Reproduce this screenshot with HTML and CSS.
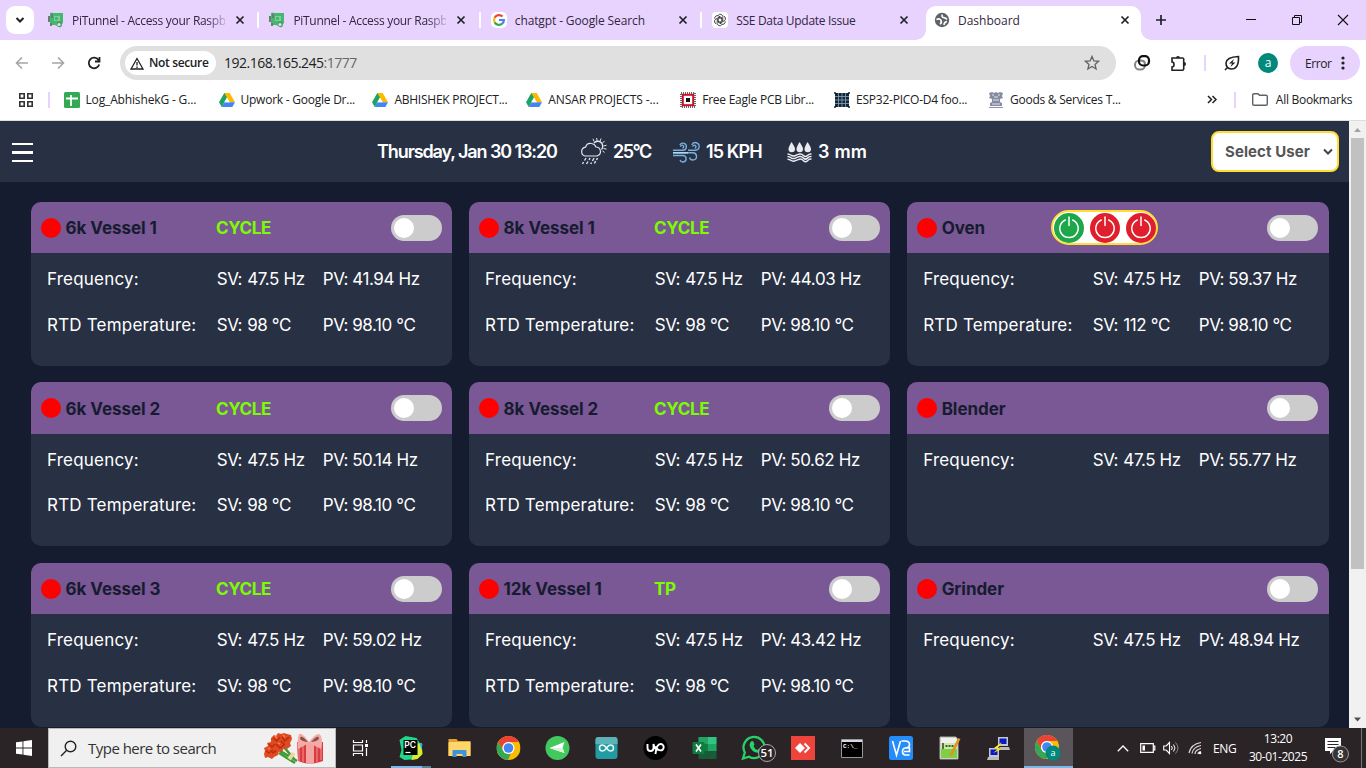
FILE: index.html
```
<!DOCTYPE html>
<html lang="en">
<head>
<meta charset="utf-8">
<title>Dashboard</title>
<link rel="stylesheet" href="styles.css">
</head>
<body>
<svg class="defs" width="0" height="0" aria-hidden="true">
  <symbol id="close" viewBox="0 0 10 10"><path d="M1.500 1.500l7 7M8.500 1.500l-7 7" stroke="#202124" stroke-width="1.700" fill="none"/></symbol>
  <symbol id="pi" viewBox="0 0 16 16"><path d="M2 1l2-.5L5 1h10v10l-1 1v2l-2 1.500L9 14l-2-1H3l-1-2z" fill="#45b86f"/><path d="M1 4v6M3 11v3M4 2v4" fill="none" stroke="#6d7a74" stroke-width="2"/><path d="M6 4h6v5H6z" fill="#7fd09c"/><circle cx="8.500" cy="6.500" r="1.800" fill="#45b86f"/><path d="M9 10l3-1 2 2-2 4-3-1z" fill="#5d8f70"/><circle cx="11" cy="12.500" r="1.600" fill="#d5e8dc"/></symbol>
  <symbol id="drive" viewBox="0 0 16 14"><path d="M5.300 0h5.200L8 4.500 2.700 14 0 9.300z" fill="#1ea362"/><path d="M5.300 0h5.400L16 9.300h-5.300z" fill="#ffba00"/><path d="M5.300 9.300H16L13.300 14H2.700z" fill="#4285f4"/><path d="M8 4.700l2.700 4.600H5.300z" fill="#fff"/></symbol>
  <symbol id="power" viewBox="0 0 32 32"><circle cx="16" cy="16" r="15"/><path d="M12.300 8A9.200 9.200 0 1 0 19.700 8M16 5v8.500" fill="none" stroke="#fff" stroke-width="1.500" stroke-linecap="round"/></symbol>
  <symbol id="chrome" viewBox="0 0 24 24"><circle cx="12" cy="12" r="12" fill="#fbbc04"/><path d="M1.600 6A12 12 0 0 1 22.400 6H12a6 6 0 0 0-5.200 9z" fill="#ea4335"/><path d="M1.600 6l5.200 9a6 6 0 0 0 7.500 2.500L11.500 24A12 12 0 0 1 1.600 6z" fill="#34a853"/><circle cx="12" cy="12" r="6.100" fill="#fff"/><circle cx="12" cy="12" r="4.800" fill="#4285f4"/></symbol>
</svg>

<div class="tabstrip">
  <div class="tabsearch"><svg width="10" height="8" viewBox="0 0 10 8"><path d="M1.500 2L5 5.500 8.500 2" fill="none" stroke="#202124" stroke-width="2"/></svg></div>
  <div class="tab"><svg class="fav" width="16" height="16"><use href="#pi"/></svg><span class="tt fade t1">PiTunnel - Access your Raspb</span><svg width="10" height="10"><use href="#close"/></svg></div>
  <div class="tab sep"><svg class="fav" width="16" height="16"><use href="#pi"/></svg><span class="tt fade t1">PiTunnel - Access your Raspb</span><svg width="10" height="10"><use href="#close"/></svg></div>
  <div class="tab sep"><svg class="fav" width="16" height="16" viewBox="0 0 16 16"><rect width="16" height="16" rx="5" fill="#fff"/><g fill="none" stroke-width="2.200"><path d="M3.700 5.600A4.900 4.900 0 0 1 11.500 4.600" stroke="#ea4335"/><path d="M3.700 5.600a5 5 0 0 0 0 4.800" stroke="#fbbc04"/><path d="M3.700 10.400a4.900 4.900 0 0 0 7.500 1.300" stroke="#34a853"/><path d="M8 8h4.900a4.900 4.900 0 0 1-1.700 3.700" stroke="#4285f4"/></g></svg><span class="tt t2">chatgpt - Google Search</span><svg width="10" height="10"><use href="#close"/></svg></div>
  <div class="tab sep"><svg class="fav" width="16" height="16" viewBox="0 0 16 16"><rect width="16" height="16" rx="4" fill="#fff"/><g transform="translate(8 8)" fill="none" stroke="#222" stroke-width=".8"><path id="petal" d="M-1.500-5.200a2.700 2.700 0 0 1 4.300 1.600V.5L0 2.200"/><use href="#petal" transform="rotate(60)"/><use href="#petal" transform="rotate(120)"/><use href="#petal" transform="rotate(180)"/><use href="#petal" transform="rotate(240)"/><use href="#petal" transform="rotate(300)"/></g></svg><span class="tt t3">SSE Data Update Issue</span><svg width="10" height="10"><use href="#close"/></svg></div>
  <div class="tab active"><svg class="fav" width="16" height="16" viewBox="0 0 16 16"><circle cx="8" cy="8" r="7.200" fill="#5f6368"/><path d="M2.500 7.500Q6 6 7 8.500T6 12" fill="none" stroke="#fff" stroke-width="1.700"/><path d="M8.500 2.500Q7 5 9.500 5.500T13 7.500M10 13q0-3 3-3.500" fill="none" stroke="#fff" stroke-width="1.500"/></svg><span class="tt t4">Dashboard</span><svg width="10" height="10"><use href="#close"/></svg></div>
  <svg class="plus" width="12" height="12" viewBox="0 0 12 12"><path d="M6 1v10M1 6h10" stroke="#202124" stroke-width="1.700"/></svg>
  <div class="wincontrols">
    <svg width="12" height="12" viewBox="0 0 12 12"><path d="M1 5.500h10" stroke="#111"/></svg>
    <svg width="12" height="12" viewBox="0 0 12 12"><path d="M1.500 3.500h7v7h-7zM3.500 3.500v-2h7v7h-2" fill="none" stroke="#111"/></svg>
    <svg width="12" height="12" viewBox="0 0 12 12"><path d="M1 1l10 10M11 1L1 11" stroke="#111" stroke-width="1.100"/></svg>
  </div>
</div>

<div class="toolbar">
  <svg class="nav" width="16" height="16" viewBox="0 0 16 16"><path d="M14 8H3M8 2.500L2.500 8 8 13.500" fill="none" stroke="#a5a5a5" stroke-width="1.600"/></svg>
  <svg class="nav" width="16" height="16" viewBox="0 0 16 16"><path d="M2 8h11M8 2.500L13.500 8 8 13.500" fill="none" stroke="#a5a5a5" stroke-width="1.600"/></svg>
  <svg class="nav" width="16" height="16" viewBox="0 0 16 16"><path d="M13.200 9.500A5.300 5.300 0 1 1 12.500 5L13.500 6M13.500 2v4.500H9" fill="none" stroke="#202124" stroke-width="1.800"/></svg>
  <div class="omnibox">
    <div class="chip"><svg width="14" height="13" viewBox="0 0 14 13"><path d="M7 1.500l6 10.500H1zM7 5v3.500M7 9.500V11" fill="none" stroke="#202124" stroke-width="1.300"/></svg><span>Not secure</span></div>
    <span class="url">192.168.165.245<i>:1777</i></span>
    <svg class="star" width="16" height="16" viewBox="0 0 16 16"><path d="M8 1.500l1.900 4.400 4.700.4-3.600 3.100 1.100 4.600L8 11.500 3.900 14 5 9.400 1.400 6.300l4.700-.4z" fill="none" stroke="#5f6368" stroke-width="1.300"/></svg>
  </div>
  <svg class="x1" width="16" height="16" viewBox="0 0 16 16"><rect x="1" y="5.500" width="10" height="9" rx="4.300" fill="none" stroke="#858585" stroke-width="2"/><rect x="5" y="1.200" width="10" height="9.300" rx="4" fill="none" stroke="#111" stroke-width="2.200"/><path d="M6.500 5.500H8q3 0 3 3" fill="none" stroke="#858585" stroke-width="1.600"/></svg>
  <svg class="x2" width="17" height="17" viewBox="0 0 17 17"><path d="M2 3h10.500q1.200 0 1.200 1v10q0 1.300-1.200 1.300H2V12q2 0 2-2.500T2 7z" fill="none" stroke="#202124" stroke-width="1.600"/><path d="M6 3a2 2 0 0 1 4 0M14 7a2 2 0 0 1 0 4" fill="#202124"/></svg>
  <b class="vbar v1"></b>
  <svg class="x3" width="16" height="16" viewBox="0 0 16 16"><path d="M14.500 1.500Q15 14 7.500 14 2 13.500 2 8q.5-6 12.500-6.500zM1 15l3-3" fill="none" stroke="#202124" stroke-width="1.600"/><path d="M10 4L5 8.500h3L6.500 12 11.500 7.500h-3z" fill="#202124"/></svg>
  <div class="avatar">a</div>
  <div class="error"><span>Error</span><svg width="4" height="16" viewBox="0 0 4 16"><g fill="#202124"><circle cx="2" cy="3" r="1.600"/><circle cx="2" cy="8" r="1.600"/><circle cx="2" cy="13" r="1.600"/></g></svg></div>
</div>

<div class="bookmarks">
  <svg class="apps" width="14" height="14" viewBox="0 0 14 14"><path d="M.8.800h4.400v4.400H.8zM8.800.800h4.400v4.400H8.800zM.8 8.800h4.400v4.400H.8zM8.800 8.800h4.400v4.400H8.800z" fill="none" stroke="#333" stroke-width="1.600"/></svg>
  <b class="vbar v2"></b>
  <div class="bm b1"><svg width="16" height="16" viewBox="0 0 16 16"><rect width="16" height="16" rx="1.500" fill="#34a853"/><path d="M7 3v11M2 6.500h12" stroke="#fff" stroke-width="1.800"/></svg><span>Log_AbhishekG - G...</span></div>
  <div class="bm b2"><svg width="16" height="14"><use href="#drive"/></svg><span>Upwork - Google Dr...</span></div>
  <div class="bm b3"><svg width="16" height="14"><use href="#drive"/></svg><span>ABHISHEK PROJECT...</span></div>
  <div class="bm b4"><svg width="16" height="14"><use href="#drive"/></svg><span>ANSAR PROJECTS -...</span></div>
  <div class="bm b5"><svg width="16" height="16" viewBox="0 0 16 16"><rect x="1" y="1" width="14" height="14" fill="none" stroke="#666" stroke-width="2" stroke-dasharray="1 1"/><rect x="2.800" y="2.800" width="10.400" height="10.400" fill="#fff" stroke="#c8102e" stroke-width="2"/><rect x="6" y="6" width="4" height="4" fill="#111"/></svg><span>Free Eagle PCB Libr...</span></div>
  <div class="bm b6"><svg width="16" height="16" viewBox="0 0 16 16"><rect x="1" y="1" width="14" height="14" fill="#12263a"/><path d="M0 1h2M14 1h2M0 15h2M14 15h2" stroke="#12263a" stroke-width="1.500"/><path d="M1 4.500h14M1 8h14M1 11.500h14M4.500 1v14M8 1v14M11.500 1v14" stroke="#8ea3b8" stroke-width=".8"/></svg><span>ESP32-PICO-D4 foo...</span></div>
  <div class="bm b7"><svg width="16" height="16" viewBox="0 0 16 16"><path d="M1 1l3-1 2 1 2-1 2 1 2-1 3 1-1 3 1 2-3 1v3l2 1v3H2v-3l2-1V7L1 6l1-2z" fill="#878da0"/><path d="M4 3h2M10 3h2M6 5h4M5 8h6M4 12h8" stroke="#dfe2ec"/><path d="M1 15.500h14" stroke="#8b91a5"/></svg><span>Goods &amp; Services T...</span></div>
  <svg class="more" width="10" height="9" viewBox="0 0 10 9"><path d="M1 1l3.500 3.500L1 8M5.500 1L9 4.500 5.500 8" fill="none" stroke="#202124" stroke-width="1.500"/></svg>
  <b class="vbar v3"></b>
  <div class="bm all"><svg width="16" height="13" viewBox="0 0 16 13"><path d="M.7 11V2q0-1.300 1.300-1.300h4l1.500 1.600h6.500q1.300 0 1.300 1.200V11q0 1.200-1.300 1.200H2Q.7 12.200.7 11z" fill="none" stroke="#5f6368" stroke-width="1.400"/></svg><span>All Bookmarks</span></div>
</div>

<div class="view">
  <div class="page">
    <header class="head">
      <div class="menu"><i></i><i></i><i></i></div>
      <span class="date">Thursday, Jan 30 13:20</span>
      <svg class="wx w1" width="27" height="27" viewBox="0 0 27 27"><g fill="none" stroke="#e2e5ea" stroke-width="1.200"><path d="M5 18a4.500 4.500 0 0 1 .5-8.800Q7 4.500 11.500 5.500 15 6 16 9q4 0 4.500 4.500 0 3.500-3.500 4.500z"/><path d="M14 5a4.500 4.500 0 0 1 7.500 6.500" stroke-width="1.400"/><path d="M14 3.500L13 .8M17 3l-.3-3M20 3.500l1-3M22 5.500L24.500 3M23.500 8l3-.8M23.500 10.500l3 .6M22.500 13l2 1.400" stroke-width="1"/><path d="M6 20l-1.500 2.500M10 20l-1 2M14 20l-1.500 3M17.500 20l-1 2M3.500 24l-1 2M8 23.500L6.500 26M11.500 24.500l-.7 1.500M15.500 23l-1 2.500" stroke-width="1.400"/></g></svg>
      <span class="temp">25°C</span>
      <svg class="wx w2" width="28" height="22" viewBox="0 0 28 22"><g fill="none" stroke="#78b0db" stroke-width="1.400"><path d="M1 9.200h9.500a3.500 3.500 0 1 0-2.700-5.200M16 9.200h7.500a3.800 3.800 0 1 0-3.700-5.200"/><path d="M8.500 5.800a1.600 1.600 0 1 1 2 1.500M20.800 5.800a1.600 1.600 0 1 1 2 1.500"/><path d="M1 11.800h20a3.600 3.600 0 1 1-3.500 4.700M1 14.500h10a3.200 3.200 0 1 1-3 4.500"/></g><path d="M1 11.800h15" stroke="#b7dcf5" stroke-width="1.400"/></svg>
      <span class="wind">15 KPH</span>
      <svg class="wx w3" width="25" height="20" viewBox="0 0 25 20"><g fill="#e8eaee"><path id="drop" d="M4.500 0Q8 5 8 7a3 3 0 0 1-6.500 0Q1.500 5 4.500 0z"/><use href="#drop" x="8"/><use href="#drop" x="16"/></g><g fill="none" stroke="#e8eaee" stroke-width="1.500"><path id="wave" d="M.5 12q2 0 4 1.500 2 1 4 0t4-1.500 4 1.500 4 0 4-1.500"/><use href="#wave" y="2.600"/><use href="#wave" y="5.200"/></g></svg>
      <span class="rain">3 mm</span>
      <div class="select"><span>Select User</span><svg width="10" height="8" viewBox="0 0 10 8"><path d="M1 1.500L5 5.500 9 1.500" fill="none" stroke="#444" stroke-width="2"/></svg></div>
    </header>
    <main class="grid">
      <section class="card"><div class="ch"><b class="dot"></b><h2>6k Vessel 1</h2><em>CYCLE</em><b class="toggle"></b></div><div class="row"><span class="f">Frequency:</span><span>SV:</span><span>47.5 Hz</span><span>PV:</span><span>41.94 Hz</span></div><div class="row"><span class="r">RTD Temperature:</span><span>SV:</span><span>98 °C</span><span>PV:</span><span>98.10 °C</span></div></section>
      <section class="card"><div class="ch"><b class="dot"></b><h2>8k Vessel 1</h2><em>CYCLE</em><b class="toggle"></b></div><div class="row"><span class="f">Frequency:</span><span>SV:</span><span>47.5 Hz</span><span>PV:</span><span>44.03 Hz</span></div><div class="row"><span class="r">RTD Temperature:</span><span>SV:</span><span>98 °C</span><span>PV:</span><span>98.10 °C</span></div></section>
      <section class="card"><div class="ch"><b class="dot"></b><h2>Oven</h2><div class="powers"><svg class="on" width="32" height="32"><use href="#power"/></svg><svg width="32" height="32"><use href="#power"/></svg><svg width="32" height="32"><use href="#power"/></svg></div><b class="toggle"></b></div><div class="row"><span class="f">Frequency:</span><span>SV:</span><span>47.5 Hz</span><span>PV:</span><span>59.37 Hz</span></div><div class="row"><span class="r">RTD Temperature:</span><span>SV:</span><span>112 °C</span><span>PV:</span><span>98.10 °C</span></div></section>
      <section class="card"><div class="ch"><b class="dot"></b><h2>6k Vessel 2</h2><em>CYCLE</em><b class="toggle"></b></div><div class="row"><span class="f">Frequency:</span><span>SV:</span><span>47.5 Hz</span><span>PV:</span><span>50.14 Hz</span></div><div class="row"><span class="r">RTD Temperature:</span><span>SV:</span><span>98 °C</span><span>PV:</span><span>98.10 °C</span></div></section>
      <section class="card"><div class="ch"><b class="dot"></b><h2>8k Vessel 2</h2><em>CYCLE</em><b class="toggle"></b></div><div class="row"><span class="f">Frequency:</span><span>SV:</span><span>47.5 Hz</span><span>PV:</span><span>50.62 Hz</span></div><div class="row"><span class="r">RTD Temperature:</span><span>SV:</span><span>98 °C</span><span>PV:</span><span>98.10 °C</span></div></section>
      <section class="card"><div class="ch"><b class="dot"></b><h2>Blender</h2><b class="toggle"></b></div><div class="row"><span class="f">Frequency:</span><span>SV:</span><span>47.5 Hz</span><span>PV:</span><span>55.77 Hz</span></div></section>
      <section class="card"><div class="ch"><b class="dot"></b><h2>6k Vessel 3</h2><em>CYCLE</em><b class="toggle"></b></div><div class="row"><span class="f">Frequency:</span><span>SV:</span><span>47.5 Hz</span><span>PV:</span><span>59.02 Hz</span></div><div class="row"><span class="r">RTD Temperature:</span><span>SV:</span><span>98 °C</span><span>PV:</span><span>98.10 °C</span></div></section>
      <section class="card"><div class="ch"><b class="dot"></b><h2>12k Vessel 1</h2><em>TP</em><b class="toggle"></b></div><div class="row"><span class="f">Frequency:</span><span>SV:</span><span>47.5 Hz</span><span>PV:</span><span>43.42 Hz</span></div><div class="row"><span class="r">RTD Temperature:</span><span>SV:</span><span>98 °C</span><span>PV:</span><span>98.10 °C</span></div></section>
      <section class="card"><div class="ch"><b class="dot"></b><h2>Grinder</h2><b class="toggle"></b></div><div class="row"><span class="f">Frequency:</span><span>SV:</span><span>47.5 Hz</span><span>PV:</span><span>48.94 Hz</span></div></section>
    </main>
  </div>
  <div class="scrollbar">
    <svg width="17" height="17" viewBox="0 0 17 17"><path d="M5 11l3.500-4 3.500 4z" fill="#a3a3a3"/></svg>
    <div class="thumb"></div>
    <svg class="down" width="17" height="17" viewBox="0 0 17 17"><path d="M5 6.500l3.500 4 3.500-4z" fill="#505050"/></svg>
  </div>
</div>

<footer class="taskbar">
  <div class="start"><svg width="16" height="16" viewBox="0 0 16 16"><path d="M0 2.300l6.500-.9v6.100H0zM7.400 1.200L16 0v7.500H7.400zM0 8.400h6.500v6.200L0 13.700zM7.400 8.400H16V16l-8.600-1.200z" fill="#fff"/></svg></div>
  <div class="search">
    <svg width="17" height="17" viewBox="0 0 17 17"><circle cx="10.500" cy="6.500" r="5.300" fill="none" stroke="#222" stroke-width="1.400"/><path d="M6.700 10.300L1 16" stroke="#222" stroke-width="1.400"/></svg>
    <span>Type here to search</span>
    <svg class="gift" width="62" height="34" viewBox="0 0 62 34"><path d="M14 18L34 30M16 22l16 10M20 15l12 14" stroke="#3e9b35" stroke-width="2.500"/><path d="M26 28l5-6" stroke="#e8d9a5" stroke-width="4"/><g fill="#e04a20"><path d="M8 7l3-3 2 1 2-3 3 1 3-1 3 1 4 1 1 4-2 4 1 3-4 3-3-1-2 4-3-1-1 4-4 2-2 2-4-2-3 1-1-4 1-3-1-3 4-2-1-3 4-1z"/></g><path d="M10 7l4 3 3-4M19 6l3 4 4-4M13 13l4 4 5-4M3 20l3 2 4-3M6 13l3 3 3-3M18 10l3 3M9 22l4-2" fill="none" stroke="#b92a13" stroke-width="1.400"/><path d="M12 5l2 2M20 4l2 2M15 12l2 1M5 17l2 1" stroke="#ff8252" stroke-width="1.300"/><path d="M34 11h26v19q-13 5-25 0z" fill="#d83b40"/><path d="M36 15v15M40 14v18M54 14v18M58 14v15" stroke="#ef7575" stroke-width="1.500"/><path d="M43 12h8v21h-8z" fill="#f3a3a0"/><path d="M46 11Q36-3 35 7q-1 7 0 11l11-6 12 6q2-6 0-13-3-6-12 6z" fill="#f5aaa5"/><path d="M45 11q-7-8-8-4 0 3 8 4zM48 11q7-8 8-4 0 3-8 4z" fill="#86504d"/></svg>
  </div>
  <div class="apps-row">
    <div class="slot"><svg width="17" height="16" viewBox="0 0 17 16"><path d="M1.500 0v2.500h9V0M1.500 16v-2.500h9V16M1.500 5h9v6h-9zM14.500 0v3M14.500 8v8" fill="none" stroke="#fff" stroke-width="1.200"/><path d="M13 4h3v3h-3z" fill="#fff"/></svg></div>
    <div class="slot run"><svg width="24" height="24" viewBox="0 0 24 24"><path d="M1 4l6-4 11 2 4 6 1 11-5 4-12 1-5-3 2-7z" fill="#21d789"/><path d="M17 8l6-1 1 11-5 5-6 1z" fill="#d8ed32"/><path d="M21 7l3 1-1 6z" fill="#18b8ee"/><path d="M5 4h14v15H5z" fill="#050505"/><text x="5.800" y="12" fill="#fff" font-family="Inter" font-size="8.500" font-weight="600">PC</text><path d="M7 16.500h5" stroke="#fff" stroke-width="1.200"/></svg></div>
    <div class="slot"><svg width="22" height="20" viewBox="0 0 22 20"><path d="M0 1h8l1.500 2H22v15H0z" fill="#e0a22c"/><path d="M0 5q0-1 1-1h21v14H0z" fill="#ffd667"/><path d="M4 19v-6q0-1 1-1h12q1 0 1 1v6h-4v-3H8v3z" fill="#3d94dc"/></svg></div>
    <div class="slot"><svg width="24" height="24"><use href="#chrome"/></svg></div>
    <div class="slot"><svg width="24" height="24" viewBox="0 0 24 24"><circle cx="12" cy="12" r="12" fill="#43c85f"/><path d="M4 12l15-6-2 6 2 5z" fill="#fff"/><path d="M4 12h13l2 5z" fill="#d8f1dd"/></svg></div>
    <div class="slot"><svg width="22" height="22" viewBox="0 0 22 22"><rect width="22" height="22" rx="3" fill="#239ba2"/><path d="M0 7V3q0-3 3-3h16q3 0 3 3v4z" fill="#5bb3b7"/><path d="M11 11c-2-3-3-3-4-3a3 3 0 0 0 0 6c1 0 2 0 4-3s3-3 4-3a3 3 0 0 1 0 6c-1 0-2 0-4-3z" fill="none" stroke="#e7f7f5" stroke-width="1.500"/></svg></div>
    <div class="slot"><svg width="24" height="24" viewBox="0 0 24 24"><circle cx="12" cy="12" r="12" fill="#000"/><path d="M4 8v4a3 3 0 0 0 6 0V8q1 5 4 6M12 18q1-10 5-10a3.200 3.200 0 0 1 0 6.400q-3 0-5-4" fill="none" stroke="#fff" stroke-width="1.900"/></svg></div>
    <div class="slot"><svg width="24" height="22" viewBox="0 0 24 22"><path d="M6 0h18v22H6z" fill="#185c37"/><path d="M6 0h9v7H6z" fill="#21a366"/><path d="M15 0h9v7h-9z" fill="#33c481"/><path d="M15 7h9v7h-9z" fill="#21a366"/><path d="M6 7h9v7H6z" fill="#107c41"/><rect y="5" width="12" height="12" rx="1" fill="#107c41"/><path d="M3.500 7.500l5 7M8.500 7.500l-5 7" stroke="#fff" stroke-width="1.600"/></svg></div>
    <div class="slot"><svg class="wide" width="34" height="28" viewBox="0 0 34 28"><path d="M1.500 24.500l1.800-6a10.500 10.500 0 1 1 4.200 4.200z" fill="none" stroke="#25d366" stroke-width="2.300"/><path d="M9 8q2-2 3 0l1 2.500-1 1.500q1 3 4 4l1.500-1.500 3 1.500q0 3-3 3Q9 18 8 11z" fill="#25d366"/><circle cx="25.500" cy="19" r="8.500" fill="#2b2629" stroke="#aaa"/><text x="25.500" y="23.200" text-anchor="middle" fill="#fff" font-family="Open Sans" font-size="11.500" font-weight="600">51</text></svg></div>
    <div class="slot"><svg width="24" height="24" viewBox="0 0 24 24"><path d="M0 0h24v24H0z" fill="#ef443b"/><path d="M9 7l5 5-5 5-5-5z" fill="#fff"/><path d="M13.500 7.500L18 12l-4.500 4.500" fill="none" stroke="#fff" stroke-width="2"/></svg></div>
    <div class="slot"><svg width="22" height="19" viewBox="0 0 22 19"><path d="M.5.500h21v18H.5z" fill="#000" stroke="#999"/><path d="M1 1h20v2H1z" fill="#d5dbe5"/><text x="2" y="9" font-family="Liberation Mono" font-size="6" font-weight="700" fill="#fff">C:\_</text></svg></div>
    <div class="slot"><svg width="24" height="24" viewBox="0 0 24 24"><rect width="24" height="24" rx="2.500" fill="#258cfb"/><path d="M3.500 5l4 14 4-14M12.500 5H16q4.500 0 4.500 3.500T16 12q-2.500.5-2.500 3.500T16 19h4.500M15 15.500h5.500V12H16" fill="none" stroke="#fff" stroke-width="1.600"/></svg></div>
    <div class="slot"><svg width="22" height="24" viewBox="0 0 22 24"><path d="M1 1h16l2 3v19H1z" fill="#eef2e9" stroke="#aaa"/><path d="M2 13h16v9H2z" fill="#7fcf40"/><path d="M2 7h16v6H2z" fill="#c8eda2"/><path d="M4 7v6M6.500 10h2M9.500 10h2M12.500 10h2" stroke="#222" stroke-width="1.300"/><path d="M11 18l8-16 2.500 1-8 15.500-3 2z" fill="#e58f24"/></svg></div>
    <div class="slot"><svg width="24" height="23" viewBox="0 0 24 23"><path d="M11 0h10v9H11zM2 11h10v9H2z" fill="#c8c8c8"/><path d="M12.500 1.500h7v5.500h-7zM3.500 12.500h7V18h-7z" fill="#0718cd"/><path d="M12 10h10l1 3h-9zM1 20h11v3H0z" fill="#bababa"/><path d="M15 5L7 11l4 1-5 4 9-4-4-1z" fill="#fff020"/></svg></div>
    <div class="slot cur"><svg width="26" height="26" viewBox="0 0 26 26"><use href="#chrome" width="24" height="24"/><circle cx="18" cy="18" r="7.500" fill="#00897b"/><text x="18" y="21" text-anchor="middle" font-family="Open Sans" font-size="9" fill="#fff">a</text></svg></div>
  </div>
  <div class="tray">
    <svg class="ic" width="12" height="7" viewBox="0 0 12 7"><path d="M.8 6.200L6 1l5.200 5.200" fill="none" stroke="#fff" stroke-width="1.300"/></svg>
    <svg class="ic i2" width="16" height="10" viewBox="0 0 16 10"><path d="M.7.700h12.600v8.600H.7zM13.500 3h1.300v4h-1.300" fill="none" stroke="#fff" stroke-width="1.200"/><path d="M2.500 2.500H5v5H2.500z" fill="#fff"/></svg>
    <svg class="ic" width="16" height="14" viewBox="0 0 16 14"><path d="M.7 5h2.500L6.500 1.500v11L3.200 9H.7z" fill="none" stroke="#fff" stroke-width="1.100"/><path d="M8.500 5q1.500 2 0 4M10.500 3.500q3 3.500 0 7" fill="none" stroke="#fff"/><path d="M12.500 1.500q5 5.500 0 11" fill="none" stroke="#888"/></svg>
    <svg class="ic" width="14" height="14" viewBox="0 0 14 14"><path d="M1 12Q3 3 13 1.500M4 12.500Q5 6 13 4.500M7 13q0-4 6-5.500M10 13q0-2 3-2.500" fill="none" stroke="#ddd" stroke-width="1.200"/><circle cx="12" cy="12" r="1.300" fill="#fff"/></svg>
    <span class="lang">ENG</span>
    <div class="clock"><span>13:20</span><span class="d">30-01-2025</span></div>
    <svg class="note" width="26" height="25" viewBox="0 0 26 25"><path d="M1 0h16v13H9l-3 3v-3H1z" fill="#fff"/><path d="M3.500 3.500h11M3.500 6.500h11M3.500 9.500h8" stroke="#2b2629"/><circle cx="16.500" cy="16" r="8" fill="#373335" stroke="#999"/><text x="16.500" y="20.200" text-anchor="middle" font-family="Open Sans" font-size="11" font-weight="600" fill="#fff">8</text></svg>
    <b class="desk"></b>
  </div>
</footer>
</body>
</html>
```

FILE: styles.css
```
* { box-sizing: border-box; }
body { margin: 0; width: 1366px; height: 768px; overflow: hidden; display: flex; flex-direction: column; background: #fff; font-family: "Open Sans", "Noto Sans", sans-serif; font-size: 12px; color: #202124; }
svg { display: block; flex: none; overflow: visible; }
.defs { position: absolute; }
span { white-space: nowrap; }

/* tab strip */
.tabstrip { height: 40px; flex: none; display: flex; align-items: center; background: #e8d3ff; padding-left: 6px; }
.tabsearch { width: 28px; height: 28px; border-radius: 9px; background: #fff; display: flex; align-items: center; justify-content: center; }
.tab { width: 221.400px; height: 40px; display: flex; align-items: center; padding-left: 14px; position: relative; flex: none; }
.tab .tt { width: 153px; margin: 1px 10px 0 8px; color: #33263f; }
.tab .fade { -webkit-mask-image: linear-gradient(90deg, #000 88%, transparent 103%); mask-image: linear-gradient(90deg, #000 88%, transparent 103%); }
.tab.sep::before { content: ""; position: absolute; left: 2px; top: 12px; width: 2px; height: 16px; background: #fff; border-radius: 1px; }
.tab.active { width: 215px; height: 34px; align-self: flex-end; background: #fff; border-radius: 10px 10px 0 0; padding: 0 0 6px 8px; margin-left: 6.400px; }
.tab.active .tt { margin-right: 9px; }
.tab.active::before, .tab.active::after { content: ""; position: absolute; bottom: 0; width: 10px; height: 10px; }
.tab.active::before { left: -10px; background: radial-gradient(circle at 0 0, transparent 9.500px, #fff 10px); }
.tab.active::after { right: -10px; background: radial-gradient(circle at 100% 0, transparent 9.500px, #fff 10px); }
.tab .t1 { letter-spacing: -0.3px; }
.t2 { letter-spacing: -0.12px; }
.t3 { letter-spacing: -0.3px; }
.plus { margin-left: 14px; }
.wincontrols { margin-left: auto; display: flex; gap: 34px; padding-right: 17px; }

/* toolbar */
.toolbar { height: 46px; flex: none; display: flex; align-items: center; padding: 0 6px 0 14px; background: #fff; }
.nav { margin-right: 20px; }
.omnibox { width: 996px; height: 34px; margin-left: -2px; border-radius: 17px; background: #e0e0e0; display: flex; align-items: center; padding: 0 16px 0 5px; }
.chip { width: 91px; height: 24px; border-radius: 12px; background: #fff; display: flex; align-items: center; padding-left: 5px; gap: 5px; font-weight: 600; letter-spacing: -0.35px; }
.chip span, .url { margin-top: -1px; }
.url { margin-left: 8px; font-size: 14px; letter-spacing: -0.5px; }
.url i { font-style: normal; color: #686868; }
.star { margin-left: auto; }
.x1 { margin-left: 18px; }
.x2 { margin-left: 20px; }
.vbar { width: 2px; height: 16px; background: #e8d3ff; flex: none; }
.v1 { margin-left: 17px; }
.x3 { margin-left: 18px; }
.avatar { width: 20px; height: 20px; border-radius: 50%; background: #00897b; color: #fff; display: grid; place-items: center; margin-left: 18px; line-height: 18px; }
.error { margin-left: auto; width: 70px; height: 34px; border-radius: 17px; background: #e8d3ff; display: flex; align-items: center; padding-left: 15px; gap: 9px; letter-spacing: -0.4px; }
.error svg { margin-left: auto; margin-right: 15px; }
.bookmarks { height: 35px; flex: none; display: flex; align-items: center; padding: 0 0 7px 19px; background: #fff; border-bottom: 1px solid #ddd; }
.bm { display: flex; align-items: center; gap: 6px; width: 153.900px; flex: none; letter-spacing: -0.24px; }
.b1 { width: 155px; letter-spacing: -0.15px; }
.b4 { letter-spacing: -0.1px; }
.v2 { margin: 0 14px 0 14.500px; }
.bm.all { width: auto; margin-left: 16px; gap: 8px; letter-spacing: -0.28px; }
.more { margin-left: 65px; }
.v3 { margin-left: 17px; }

/* dashboard page */
.view { height: 607px; flex: none; display: flex; overflow: hidden; font-family: Inter, "Open Sans", sans-serif; }
.page { width: 1349px; background: #161c2f; overflow: hidden; }
.head { height: 61px; background: #283044; color: #fff; display: flex; align-items: center; padding: 0 10px 0 12px; font-size: 18px; font-weight: 600; }
.menu { width: 21px; display: flex; flex-direction: column; gap: 6px; margin-top: 2px; }
.menu i { height: 2.500px; background: #fff; }
.date { width: 181px; margin-left: 344px; letter-spacing: -1.1px; }
.w1 { margin-left: 22px; }
.temp { width: 39px; margin-left: 6px; letter-spacing: -1.5px; }
.w2 { margin-left: 20px; }
.wind { width: 57px; margin-left: 6px; letter-spacing: -0.9px; }
.w3 { margin-left: 24px; }
.rain { margin-left: 6px; letter-spacing: 0.2px; }
.select { margin-left: auto; width: 128px; height: 41px; border: 2px solid #fd3; border-radius: 8px; background: #fff; color: #555; font-size: 15px; font-weight: 700; letter-spacing: 0.08px; display: flex; align-items: center; justify-content: space-between; padding: 0 4px 0 12px; }
.grid { display: grid; grid-template-columns: repeat(3, 421.400px); grid-auto-rows: 163.700px; gap: 16.800px 16.700px; padding: 20px 0 0 31px; }
.card { border-radius: 10px; background: #283044; overflow: hidden; color: #fff; }
.ch { height: 51.400px; background: #7a5795; display: grid; grid-template-columns: 20px 150px 1fr 51px; align-items: center; padding: 0 10.400px 0 10px; }
.dot { width: 20px; height: 20px; border-radius: 50%; background: #f00; }
.ch h2 { margin: 1px 0 0 4.500px; font-size: 17px; font-weight: 700; color: #161c2f; white-space: nowrap; letter-spacing: -0.05px; }
.ch em { font-style: normal; font-size: 17px; font-weight: 700; color: #7cfc00; padding-left: 5px; letter-spacing: -0.35px; margin-top: 1px; }
.toggle { grid-column: 4; width: 51px; height: 26px; border-radius: 13px; background: #ccc; padding: 3px; }
.toggle::before { content: ""; display: block; width: 20px; height: 20px; border-radius: 50%; background: #fff; }
.powers { width: 107px; height: 35px; margin-left: -36px; border: 2px solid #fd3; border-radius: 18px; background: #fff; display: flex; gap: 4px; justify-content: center; align-items: center; fill: #e01f2d; }
.powers .on { fill: #1da64a; }
.row { height: 45.700px; display: grid; grid-template-columns: 169.700px 30.500px 75.500px 29.500px 1fr; align-items: center; padding-left: 16px; padding-top: 6px; font-size: 17px; letter-spacing: -0.4px; }
.row .f, .row .r { letter-spacing: 0.2px; }
.scrollbar { width: 17px; background: #f1f1f1; display: flex; flex-direction: column; align-items: center; }
.thumb { width: 13px; height: 431px; background: #c1c1c1; }
.down { margin-top: auto; }

/* taskbar */
.taskbar { height: 40px; flex: none; display: flex; background: #2b2427; color: #fff; }
.start { width: 48px; display: grid; place-items: center; }
.search { width: 288px; background: #f0f0f0; border: 1px solid #b9b9b9; display: flex; align-items: center; padding-left: 11px; color: #333; font-size: 15px; letter-spacing: -0.52px; }
.search span { margin-left: 11px; width: 175px; }
.apps-row { display: flex; width: 737px; flex: none; }
.slot { width: 49.130px; flex: none; display: grid; place-items: center; position: relative; }
.slot .wide { margin-left: 9px; }
.slot:nth-child(n+2):nth-child(-n+9) svg { transform: translateX(.5px); }
.run::after { content: ""; position: absolute; left: 6px; bottom: 0; width: 40px; height: 2px; background: linear-gradient(90deg, #76b9ed 31px, #557f9f 31px); }
.cur { background: #59555a; box-shadow: inset 0 -2px #76b9ed; }
.tray { flex: 1; display: flex; align-items: center; padding-left: 44px; }
.ic { margin-right: 9px; }
.i2 { margin-left: 2px; margin-right: 7px; }
.lang { width: 24px; font-size: 12px; margin-left: 2px; letter-spacing: -0.4px; }
.clock { width: 60px; margin-left: 11px; display: flex; flex-direction: column; align-items: center; line-height: 18px; font-size: 12px; letter-spacing: -0.45px; }
.note { margin-left: 16px; margin-top: 5px; }
.desk { width: 1px; height: 40px; background: #777; margin-left: auto; margin-right: 4px; }
```
